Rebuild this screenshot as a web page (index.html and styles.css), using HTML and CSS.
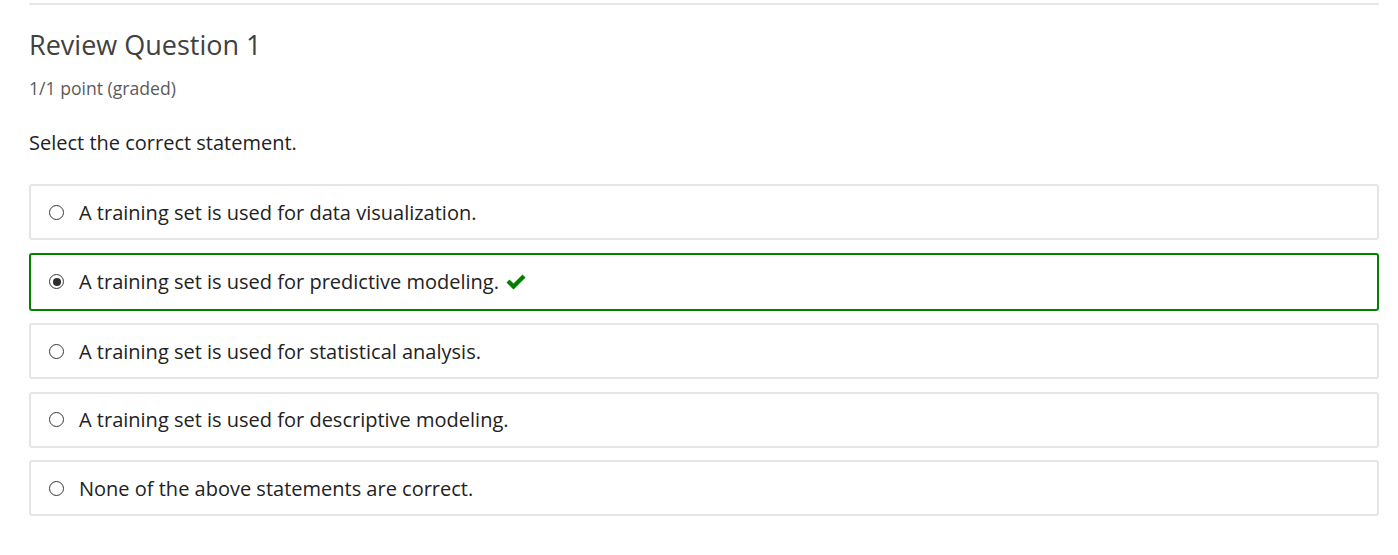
FILE: index.html
```html
<!DOCTYPE html>
<html>
<head>
<meta charset="utf-8">
<link rel="stylesheet" href="styles.css">
</head>
<body>
<div class="page">
  <div class="rule"></div>
  <h2 class="title">Review Question 1</h2>
  <div class="points">1/1 point (graded)</div>
  <p class="prompt">Select the correct statement.</p>
  <div class="choices">
    <label class="choice">
      <span class="radio"></span>
      <span class="text">A training set is used for data visualization.</span>
    </label>
    <label class="choice correct">
      <span class="radio checked"></span>
      <span class="text">A training set is used for predictive modeling.</span>
      <svg class="check" width="22" height="18" viewBox="0 0 22 18"><path d="M1.5 9.5 L4.5 6.5 L8.5 10.5 L17.5 1.5 L20.5 4.5 L8.5 16.5 Z" fill="#008100"/></svg>
    </label>
    <label class="choice">
      <span class="radio"></span>
      <span class="text">A training set is used for statistical analysis.</span>
    </label>
    <label class="choice">
      <span class="radio"></span>
      <span class="text">A training set is used for descriptive modeling.</span>
    </label>
    <label class="choice">
      <span class="radio"></span>
      <span class="text">None of the above statements are correct.</span>
    </label>
  </div>
</div>
</body>
</html>
```

FILE: styles.css
```css
html, body {
  margin: 0;
  padding: 0;
  background: #ffffff;
}
body {
  font-family: "Open Sans", "Liberation Sans", sans-serif;
  color: #313131;
}
.page {
  margin-left: 29px;
  width: 1350px;
  padding-top: 3px;
}
.rule {
  height: 2px;
  background: #e7e7e7;
}
.title {
  margin: 22px 0 0 0;
  font-size: 27px;
  font-weight: 400;
  line-height: 36px;
  color: #414141;
}
.points {
  margin-top: 13px;
  font-size: 17.6px;
  line-height: 24px;
  color: #5b5b5b;
}
.prompt {
  margin: 30px 0 0 0;
  font-size: 20px;
  line-height: 26px;
  color: #222222;
}
.choices {
  margin-top: 28px;
  display: flex;
  flex-direction: column;
  gap: 12.5px;
}
.choice {
  display: flex;
  align-items: center;
  height: 52px;
  padding: 0 18px;
  border: 2px solid #e5e5e5;
  border-radius: 3px;
  font-size: 20px;
  color: #222222;
}
.choice.correct {
  height: 54px;
  border-color: #008100;
}
.radio {
  border: 1px solid #3a3a3a;
  border-radius: 50%;
  box-sizing: border-box;
  flex: none;
  margin-right: 15px;
  position: relative;
  width: 15px;
  height: 15px;
}
.radio.checked::after {
  content: "";
  position: absolute;
  left: 2.5px;
  top: 2.5px;
  width: 8px;
  height: 8px;
  border-radius: 50%;
  background: #2e2e2e;
}
.check {
  margin-left: 6px;
  flex: none;
}
```
